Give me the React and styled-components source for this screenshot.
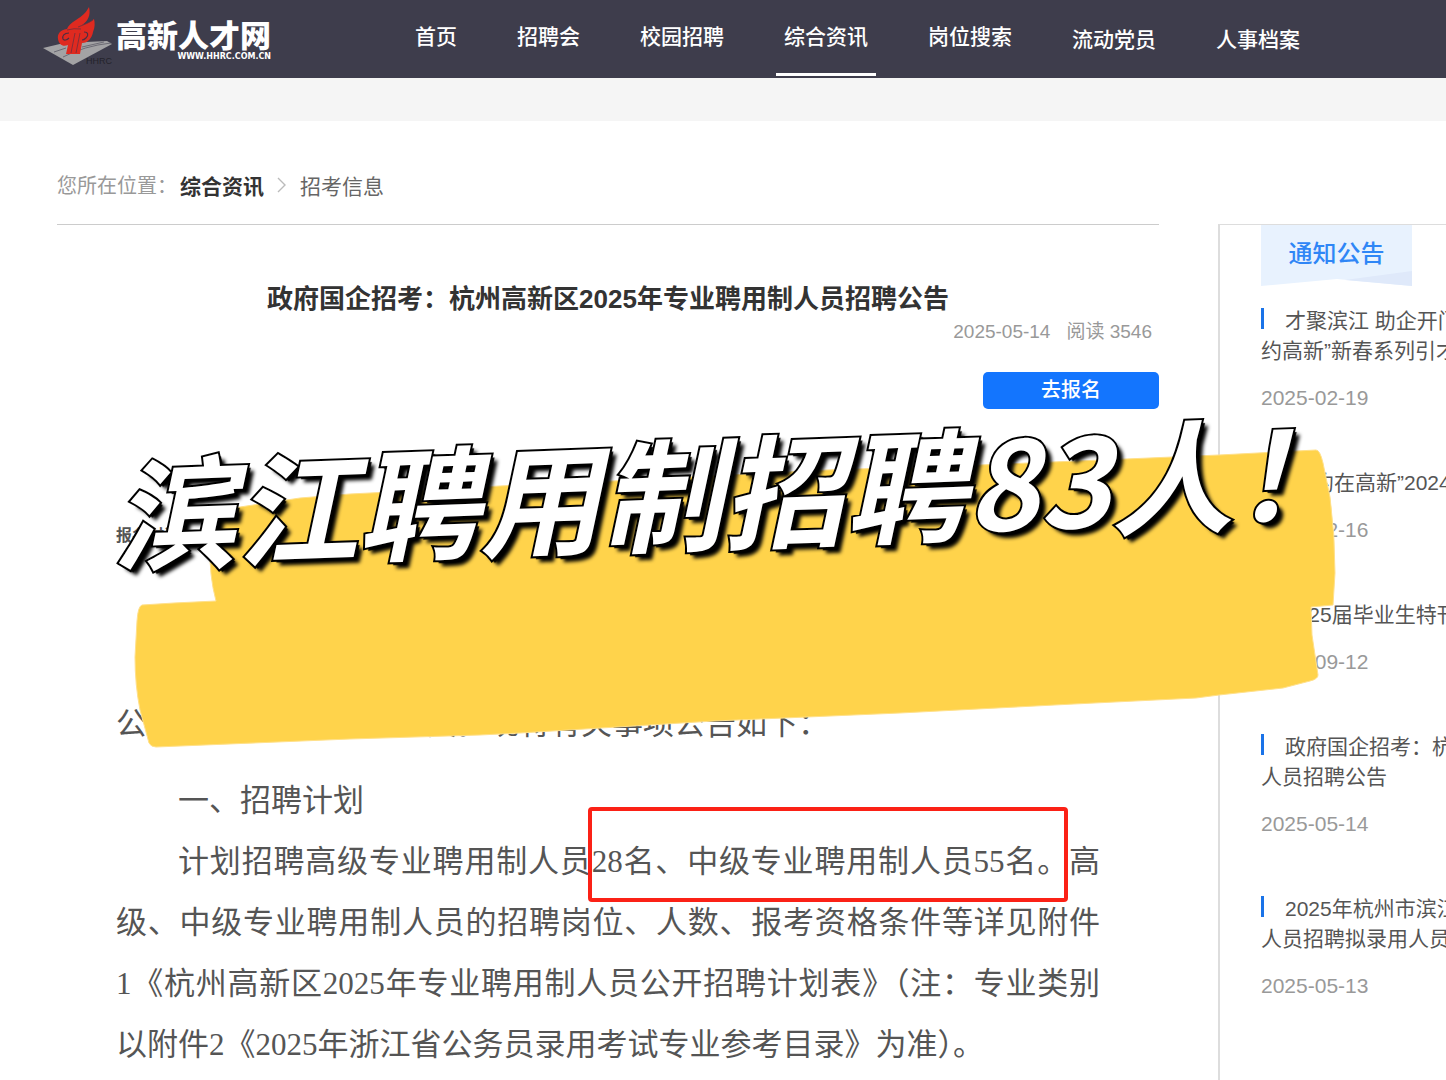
import React from "react";
import styled, { createGlobalStyle, css } from "styled-components";

const navItems = [
  { label: "首页" },
  { label: "招聘会" },
  { label: "校园招聘" },
  { label: "综合资讯", active: true },
  { label: "岗位搜索" },
  { label: "流动党员", tall: true },
  { label: "人事档案", tall: true },
];

const notices = [
  { lines: ["才聚滨江 助企开门红", "约高新”新春系列引才"], date: "2025-02-19" },
  { lines: ["“相约在高新”2024"], date: "2024-12-16" },
  { lines: ["2025届毕业生特刊"], date: "2024-09-12" },
  { lines: ["政府国企招考：杭州", "人员招聘公告"], date: "2025-05-14" },
  { lines: ["2025年杭州市滨江区", "人员招聘拟录用人员"], date: "2025-05-13" },
];

const Emblem = () => (
  <EmblemSvg viewBox="0 0 76 64" aria-hidden="true">
    <path d="M1 42 L22 37 L65 35 L70 38 L31 59 Z" fill="#a3a3a5" />
    <path
      d="M12 46 L24 42 M21 51 Q42 40 69 37 M40 41 L62 36"
      fill="none"
      stroke="#5d5c67"
      strokeWidth="0.8"
    />
    <path
      d="M47 1 C44 7 40 10 34 14 C29 17 26 20 25 23 C18 24 15 28 16 33 C17 39 21 41 26 39 L24 48 L38 48 L40 37 C46 37 50 32 51 26 C53 21 53 17 52 13 C49 16 44 18 40 19 C46 15 49 9 47 1 Z"
      fill="#df2a20"
    />
    <path
      d="M27 27 C22 27 20 30 21 33 C22 35 25 34 27 32 M42 26 C46 26 47 29 44 32 C43 33 41 34 40 34"
      fill="none"
      stroke="#4d2f42"
      strokeWidth="1.2"
    />
    <path
      d="M25 24 Q32 22 39 23 M33 27 L29 47 M38 27 L34 47 M51 14 C47 17 41 19 36 21"
      fill="none"
      stroke="#6e2f3c"
      strokeWidth="0.8"
    />
    <text x="44" y="58" fontSize="9" fontFamily="Liberation Sans, sans-serif" fill="#24232b">
      HHRC
    </text>
  </EmblemSvg>
);

const App = () => {
  return (
    <Page>
      <GlobalStyle />
      <Header>
        <Brand href="#">
          <Emblem />
          <BrandText>
            <BrandName>高新人才网</BrandName>
            <BrandUrl>WWW.HHRC.COM.CN</BrandUrl>
          </BrandText>
        </Brand>
        <Nav>
          {navItems.map((item) => (
            <NavLink key={item.label} href="#" $active={item.active} $tall={item.tall}>
              {item.label}
            </NavLink>
          ))}
        </Nav>
      </Header>
      <Strip />
      <Breadcrumb>
        <CrumbLabel>您所在位置：</CrumbLabel>
        <CrumbLink href="#" $strong>综合资讯</CrumbLink>
        <Chevron viewBox="0 0 10 18" aria-hidden="true">
          <path d="M1 2 L8 9 L1 16" fill="none" stroke="#bbb" strokeWidth="1.4" />
        </Chevron>
        <CrumbLink href="#">招考信息</CrumbLink>
      </Breadcrumb>
      <Columns>
        <Main>
          <Title>政府国企招考：杭州高新区2025年专业聘用制人员招聘公告</Title>
          <Meta>
            <span>2025-05-14</span>
            <span>阅读 3546</span>
          </Meta>
          <ApplyButton type="button">去报名</ApplyButton>
          <Article>
            <SignUpTime>报名时间</SignUpTime>
            <Lead>公开招聘专业聘用制人员。现将有关事项公告如下：</Lead>
            <Paragraph>一、招聘计划</Paragraph>
            <Paragraph $fill>
              计划招聘高级专业聘用制人员28名、中级专业聘用制人员55名。高级、中级专业聘用制人员的招聘岗位、人数、报考资格条件等详见附件
            </Paragraph>
            <Paragraph $flush>
              1《杭州高新区2025年专业聘用制人员公开招聘计划表》（注：专业类别以附件2《2025年浙江省公务员录用考试专业参考目录》为准）。
            </Paragraph>
          </Article>
        </Main>
        <Sidebar>
          <Badge>
            <BadgeShape viewBox="0 0 151 61" preserveAspectRatio="none" aria-hidden="true">
              <path d="M0 0 H151 V61 L76 54 L0 61 Z" fill="#e8f2fe" />
              <path d="M84 55 L151 46 V61 Z" fill="#dfe9fa" />
            </BadgeShape>
            <BadgeText>通知公告</BadgeText>
          </Badge>
          <NoticeList>
            {notices.map((notice) => (
              <Notice key={notice.date}>
                <NoticeLink href="#">
                  {notice.lines.map((line) => (
                    <NoticeLine key={line}>{line}</NoticeLine>
                  ))}
                </NoticeLink>
                <NoticeDate>{notice.date}</NoticeDate>
              </Notice>
            ))}
          </NoticeList>
        </Sidebar>
      </Columns>
      <RedFrame />
      <Brush viewBox="0 0 1220 310" aria-hidden="true">
        <path
          d="M92 68 L120 62 L180 53 L230 49 L290 46 L380 41 L493 36 L707 25 L860 20 L933 17 L1006 14 L1099 10 L1196 5 Q1200 5 1203 18 L1210 52 Q1215 90 1215 128 L1213 160 L1191 162 L1192 190 L1198 230 Q1198 234 1190 236 L1163 243 L1099 250 L1076 253 L954 259 L780 268 L594 276 L400 288 L360 290 L230 294 L36 302 Q31 302 29 298 L20 265 Q15 240 15 212 L17 176 Q18 161 22 160 L54 158 L96 156 Q89 130 90 100 Z"
          fill="#ffd34b"
          stroke="#ffe08a"
          strokeWidth="1"
        />
      </Brush>
      <Headline>滨江聘用制招聘83人！</Headline>
    </Page>
  );
};

export default App;

const GlobalStyle = createGlobalStyle`
  body {
    margin: 0;
    background: #fff;
    font-family: "Liberation Sans", "Noto Sans CJK SC", sans-serif;
    color: #555;
  }

  * {
    box-sizing: border-box;
  }

  a {
    color: inherit;
    text-decoration: none;
  }
`;

const Page = styled.div`
  position: relative;
  display: flex;
  flex-direction: column;
  min-height: 100vh;
  overflow: hidden;
`;

const Header = styled.header`
  display: flex;
  height: 78px;
  padding-left: 42px;
  background: #3e3d4c;
  color: #fff;
`;

const Brand = styled.a`
  display: flex;
  flex: 0 0 365px;
  padding-top: 6px;
`;

const EmblemSvg = styled.svg`
  width: 76px;
  height: 64px;
`;

const BrandText = styled.div`
  display: flex;
  flex-direction: column;
  align-items: flex-end;
  padding-top: 15px;
  margin-left: -2px;
`;

const BrandName = styled.span`
  font-size: 31px;
  font-weight: 900;
  line-height: 32px;
  white-space: nowrap;
`;

const BrandUrl = styled.span`
  font-family: "DejaVu Sans", sans-serif;
  font-size: 8px;
  font-weight: bold;
  line-height: 8px;
`;

const Nav = styled.nav`
  display: flex;
  align-items: flex-start;
  gap: 44px;
`;

const NavLink = styled.a`
  padding: 0 8px;
  border-bottom: 3px solid transparent;
  font-size: 21px;
  font-weight: 500;
  line-height: 73px;
  white-space: nowrap;

  ${({ $active }) => $active && css`
    border-bottom-color: #fff;
  `}

  ${({ $tall }) => $tall && css`
    border-bottom: 0;
    line-height: 79px;
  `}
`;

const Strip = styled.div`
  height: 43px;
  background: #f5f5f5;
`;

const Breadcrumb = styled.nav`
  display: flex;
  align-items: center;
  height: 103px;
  padding: 28px 0 4px 57px;
  font-size: 21px;
`;

const CrumbLabel = styled.span`
  margin-right: 3px;
  font-size: 20px;
  color: #999;
`;

const CrumbLink = styled.a`
  color: ${({ $strong }) => ($strong ? "#333" : "#666")};
  font-weight: ${({ $strong }) => ($strong ? "bold" : "normal")};
`;

const Chevron = styled.svg`
  width: 10px;
  height: 18px;
  margin: 0 13px;
`;

const Columns = styled.div`
  display: grid;
  flex: 1;
  grid-template-columns: minmax(0, 1fr) 228px;
  column-gap: 59px;
  padding-left: 57px;
`;

const Main = styled.main`
  display: flex;
  flex-direction: column;
  border-top: 1px solid #ccc;
  padding-top: 54px;
`;

const Title = styled.h1`
  margin: 0;
  font-size: 26px;
  line-height: 40px;
  text-align: center;
  color: #333;
`;

const Meta = styled.div`
  display: flex;
  justify-content: flex-end;
  gap: 16px;
  padding-right: 7px;
  font-size: 19px;
  line-height: 26px;
  color: #999;
`;

const ApplyButton = styled.button`
  align-self: flex-end;
  width: 176px;
  height: 37px;
  margin-top: 27px;
  padding: 0;
  border: 0;
  border-radius: 5px;
  background: #1375fe;
  color: #fff;
  font-family: inherit;
  font-size: 20px;
  font-weight: 500;
  line-height: 35px;
`;

const Article = styled.article`
  padding: 115px 59px 0;
  font-family: "Liberation Serif", "Noto Sans CJK SC", serif;
`;

const SignUpTime = styled.p`
  margin: 0 0 145px;
  font-size: 16px;
  font-weight: bold;
  line-height: 24px;
`;

const Paragraph = styled.p`
  margin: 0;
  font-size: 31px;
  line-height: 61px;
  text-align: justify;
  text-align-last: ${({ $fill }) => ($fill ? "justify" : "auto")};
  text-indent: ${({ $flush }) => ($flush ? 0 : "2em")};
`;

const Lead = styled(Paragraph)`
  margin-bottom: 16px;
  text-indent: 0;
`;

const Sidebar = styled.aside`
  overflow: hidden;
  border-top: 1px solid #ddd;
  border-left: 2px solid #ddd;
  padding-left: 41px;
`;

const Badge = styled.h2`
  position: relative;
  width: 151px;
  height: 61px;
  margin: 0 0 20px;
  text-align: center;
`;

const BadgeShape = styled.svg`
  position: absolute;
  inset: 0;
  width: 100%;
  height: 100%;
`;

const BadgeText = styled.span`
  position: relative;
  font-size: 24px;
  font-weight: 500;
  line-height: 58px;
  color: #2f86f6;
`;

const NoticeList = styled.ul`
  margin: 0;
  padding: 0;
  list-style: none;
`;

const Notice = styled.li`
  position: relative;
  margin-bottom: 58px;

  &::before {
    content: "";
    position: absolute;
    top: 2px;
    left: 0;
    width: 3px;
    height: 21px;
    background: #1a73e8;
  }
`;

const NoticeLink = styled.a`
  display: block;
  margin-bottom: 20px;
  font-size: 21px;
  line-height: 30px;
  text-indent: 24px;
  white-space: nowrap;
`;

const NoticeLine = styled.span`
  display: block;

  & + & {
    text-indent: 0;
  }
`;

const NoticeDate = styled.time`
  display: block;
  font-size: 21px;
  line-height: 24px;
  color: #999;
`;

const RedFrame = styled.div`
  position: absolute;
  top: 807px;
  left: 588px;
  width: 480px;
  height: 95px;
  border: 4px solid #fb2116;
  border-radius: 4px;
`;

const Brush = styled.svg`
  position: absolute;
  top: 445px;
  left: 120px;
  width: 1220px;
  height: 310px;
  pointer-events: none;
`;

const Headline = styled.p`
  position: absolute;
  top: 397px;
  left: 112px;
  margin: 0;
  font-family: "Noto Sans CJK SC", sans-serif;
  font-size: 122px;
  font-weight: bold;
  font-style: italic;
  line-height: 180px;
  white-space: nowrap;
  color: #fff;
  transform: rotate(-2deg);
  -webkit-text-stroke: 4px #000;
  paint-order: stroke fill;
  text-shadow: 3px 3px 1px #000, 6px 6px 4px #000;
`;
